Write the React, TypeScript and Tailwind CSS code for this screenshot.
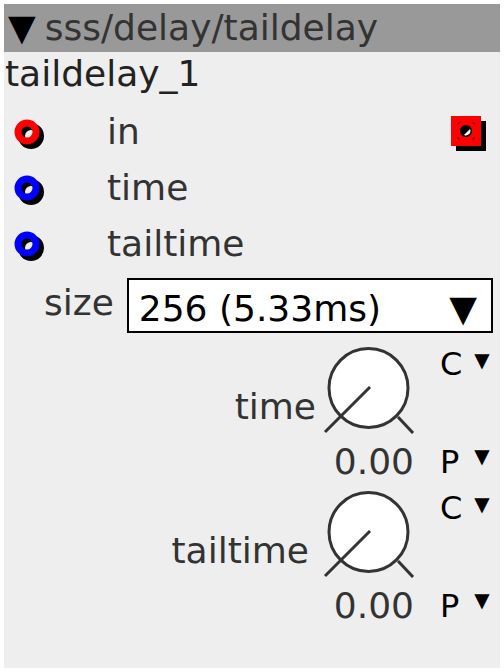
const font = { fontFamily: '"DejaVu Sans", Verdana, sans-serif' };

const Inlet = ({ color }: { color: string }) => (
  <svg width="40" height="40" viewBox="0 0 40 40" className="shrink-0">
    <circle cx="24" cy="24" r="9.5" fill="none" stroke="#000" strokeWidth="7" />
    <circle cx="20" cy="20" r="9" fill="none" stroke={color} strokeWidth="7" />
  </svg>
);

const Outlet = () => (
  <svg width="40" height="40" viewBox="0 0 40 40" className="shrink-0">
    <rect x="5" y="5" width="30" height="30" fill="#000" />
    <rect x="0" y="0" width="30" height="30" fill="#ff0000" />
    <circle cx="15" cy="15" r="6" fill="#000" />
    <path d="M13 19 L19 13 A4.5 4.5 0 0 1 13 19 Z" fill="#fff" />
    <path d="M7 9 V7 H9 M21 7 H23 V9 M7 21 V23 H9 M21 23 H23 V21" fill="none" stroke="#600" strokeWidth="1" />
  </svg>
);

const Knob = () => (
  <svg width="100" height="96" viewBox="0 0 100 96" className="block">
    <circle cx="50.5" cy="46" r="39.5" fill="#fff" stroke="#333" strokeWidth="3" />
    <line x1="52" y1="45" x2="7" y2="90" stroke="#333" strokeWidth="3" />
    <line x1="80" y1="75" x2="95" y2="91" stroke="#333" strokeWidth="3" />
  </svg>
);

const KnobBlock = ({ label, labelWidth }: { label: string; labelWidth: string }) => (
  <div className="flex h-[144px]">
    <div className={`${labelWidth} shrink-0 pt-[49px] text-right text-[36px] leading-none text-[#333]`}>
      {label}
    </div>
    <div className="ml-auto w-[100px] shrink-0 pt-[2px]">
      <Knob />
      <div className="mt-[6px] pr-[4px] text-right text-[36px] leading-none text-[#333]">0.00</div>
    </div>
    <div className="flex w-[82px] shrink-0 flex-col pl-[22px] text-black">
      <div className="mt-[8px] flex items-start gap-[12px]">
        <span className="text-[32px] leading-none">C</span>
        <span className="mt-[2px] text-[20px] leading-none">▼</span>
      </div>
      <div className="mt-[66px] flex items-start gap-[15px]">
        <span className="text-[32px] leading-none">P</span>
        <span className="text-[20px] leading-none">▼</span>
      </div>
    </div>
  </div>
);

const InletRow = ({ color, label, outlet }: { color: string; label: string; outlet?: boolean }) => (
  <div className="flex h-14 items-center">
    <div className="ml-[3px]">
      <Inlet color={color} />
    </div>
    <span className="ml-[60px] text-[36px] leading-none text-[#333]">{label}</span>
    {outlet && (
      <div className="ml-auto mr-[9px] mt-[8px]">
        <Outlet />
      </div>
    )}
  </div>
);

export default function App() {
  return (
    <div className="min-h-screen bg-white p-1" style={font}>
      <div className="flex h-[664px] w-[496px] flex-col bg-[#eeeeee]">
        <div className="flex h-12 items-center bg-[#999999] pl-[4px] text-[36px] leading-none text-[#333]">
          <span className="text-black">▼</span>
          <span className="ml-[9px]">sss/delay/taildelay</span>
        </div>
        <div className="h-[52px] pl-[1px] pt-[4px] text-[36px] leading-none text-[#222]">taildelay_1</div>
        <InletRow color="#ff0000" label="in" outlet />
        <InletRow color="#0000ff" label="time" />
        <InletRow color="#0000ff" label="tailtime" />
        <div className="flex h-[68px] items-start">
          <span className="ml-[40px] mt-[13px] text-[36px] leading-none text-[#333]">size</span>
          <div className="ml-[13px] mt-[6px] flex h-[55px] w-[366px] items-start justify-between border-2 border-black bg-white pl-[10px] pr-[14px] pt-[11px] text-[36px] leading-none text-black">
            <span>256 (5.33ms)</span>
            <span>▼</span>
          </div>
        </div>
        <KnobBlock label="time" labelWidth="w-[312px]" />
        <KnobBlock label="tailtime" labelWidth="w-[305px]" />
      </div>
    </div>
  );
}
